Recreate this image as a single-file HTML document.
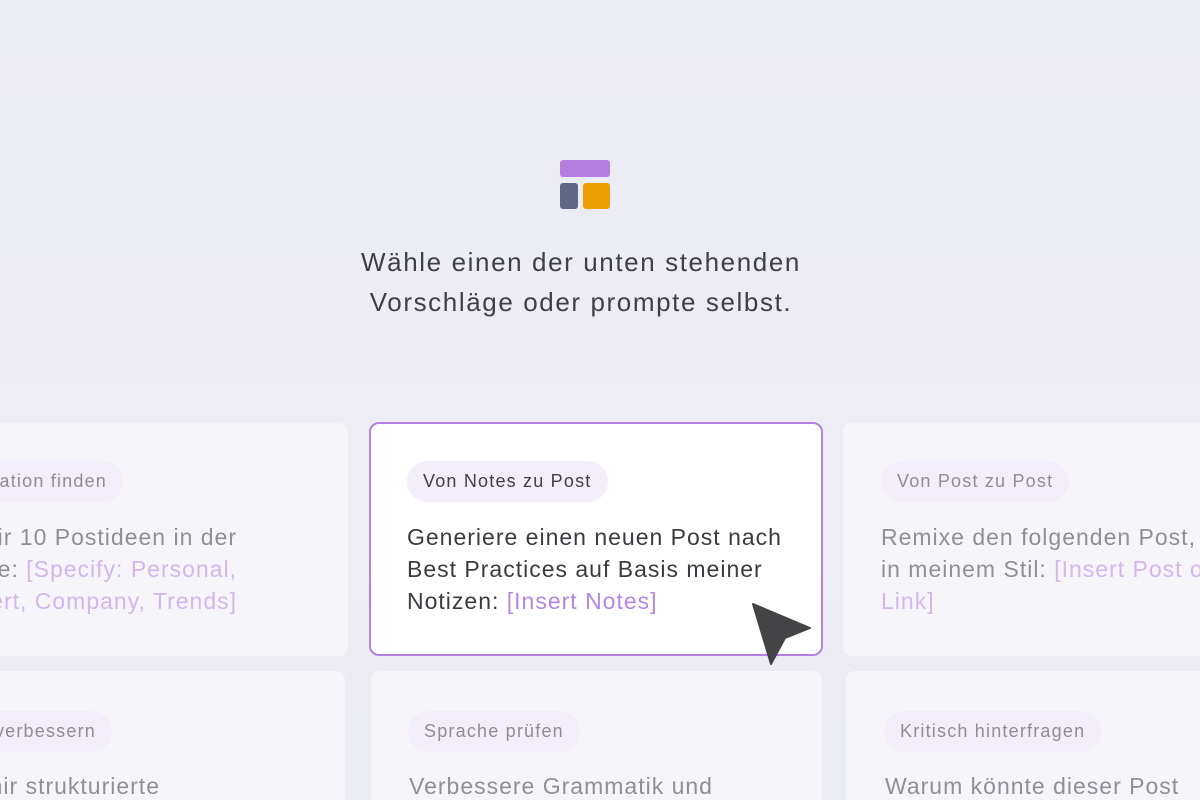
<!DOCTYPE html>
<html><head><meta charset="utf-8"><style>
*{margin:0;padding:0;box-sizing:border-box}
html,body{width:1200px;height:800px;overflow:hidden}
body{background:linear-gradient(180deg,#ebebf3 0%,#eeedf5 60%,#ececf4 100%);font-family:"Liberation Sans",sans-serif;position:relative}
.title{position:absolute;left:0;width:1162px;top:242px;text-align:center;font-size:26px;line-height:40px;color:#3f3f46;letter-spacing:1.6px}
.card{position:absolute;border-radius:9px;background:#f6f6fa;height:233px}
.card.side{background:rgba(247,247,251,.8)}
.card.main{background:#fff;border:2px solid #b581e0;border-radius:10px}
.pill{position:absolute;height:41px;border-radius:21px;background:#f3eef9;font-size:18px;line-height:41px;padding:0 16px;white-space:nowrap;color:#8e8e93;letter-spacing:1.2px}
.main .pill{color:#3f3f46}
.txt{position:absolute;font-size:23px;line-height:32px;color:#8f8f95;white-space:nowrap;letter-spacing:1px}
.main .txt{color:#3b3b42}
.acc{color:#d5b6ee}
.main .acc{color:#b586e4}
.r{text-align:right}
</style></head><body>
<svg style="position:absolute;left:559px;top:159px" width="52" height="52">
<rect x="1" y="1" width="50" height="17" rx="3" fill="#b57ee0"/>
<rect x="1" y="24" width="18" height="26" rx="3" fill="#5e6886"/>
<rect x="24" y="24" width="27" height="26" rx="3" fill="#eb9e00"/>
</svg>
<div class="title">Wähle einen der unten stehenden<br>Vorschläge oder prompte selbst.</div>

<div class="card side" style="left:-104px;top:423px;width:452px"></div>
<div class="pill" style="right:1077px;top:461px">Inspiration finden</div>
<div class="txt r" style="right:963px;top:521px">Gib mir 10 Postideen in der<br>Kategorie: <span class="acc">[Specify: Personal,</span><br><span class="acc">Expert, Company, Trends]</span></div>

<div class="card main" style="left:369px;top:422px;width:454px;height:234px">
<div class="pill" style="left:36px;top:37px">Von Notes zu Post</div>
<div class="txt" style="left:36px;top:97px">Generiere einen neuen Post nach<br>Best Practices auf Basis meiner<br>Notizen: <span class="acc">[Insert Notes]</span></div>
</div>

<div class="card side" style="left:843px;top:423px;width:460px"></div>
<div class="pill" style="left:881px;top:461px">Von Post zu Post</div>
<div class="txt" style="left:881px;top:521px">Remixe den folgenden Post,<br>in meinem Stil: <span class="acc">[Insert Post or</span><br><span class="acc">Link]</span></div>

<div class="card side" style="left:-104px;top:671px;width:449px;height:129px;border-radius:9px 9px 0 0"></div>
<div class="pill" style="right:1088px;top:711px">Hook verbessern</div>
<div class="txt r" style="right:1040px;top:770px">Gib mir strukturierte</div>

<div class="card side" style="left:371px;top:671px;width:451px;height:129px;border-radius:9px 9px 0 0"></div>
<div class="pill" style="left:408px;top:711px">Sprache prüfen</div>
<div class="txt" style="left:409px;top:770px">Verbessere Grammatik und</div>

<div class="card side" style="left:846px;top:671px;width:354px;height:129px;border-radius:9px 0 0 0"></div>
<div class="pill" style="left:884px;top:711px">Kritisch hinterfragen</div>
<div class="txt" style="left:885px;top:770px">Warum könnte dieser Post</div>

<svg style="position:absolute;left:0;top:0" width="1200" height="800">
<polygon points="753,604 810,628 785,638 771,664" fill="#444446" stroke="#444446" stroke-width="2" stroke-linejoin="round"/>
</svg>
</body></html>
